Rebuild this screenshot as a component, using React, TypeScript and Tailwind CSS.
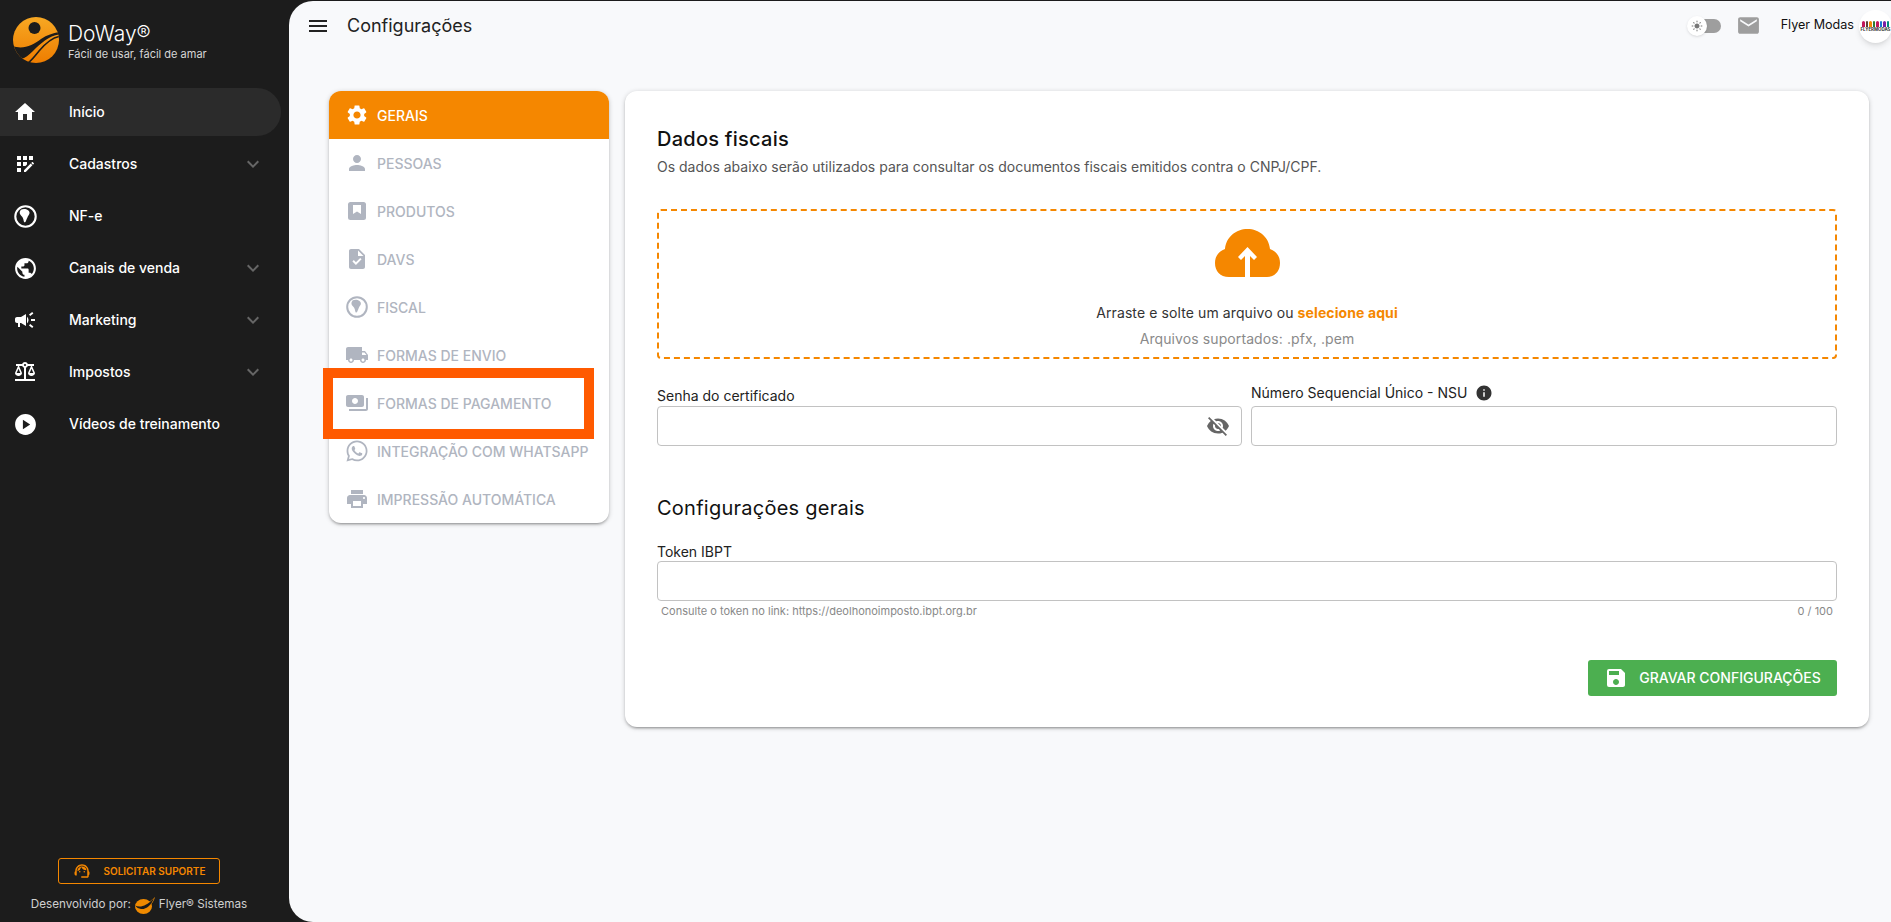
import React from 'react';
import {
  MdHome, MdAppRegistration, MdPublic, MdCampaign, MdBalance, MdPlayCircle, MdSupportAgent, MdPerson,
  MdTask, MdLocalShipping, MdPayments, MdPrint, MdVisibilityOff, MdInfo, MdSave, MdEmail, MdMenu,
  MdKeyboardArrowDown, MdSettings, MdLightMode,
} from 'react-icons/md';
import { FaWhatsapp } from 'react-icons/fa';

const Logo = () => (
  <svg viewBox="0 0 46 46" className="w-[46px] h-[46px] shrink-0">
    <defs>
      <linearGradient id="logoGrad" x1="0" y1="0" x2="0" y2="1">
        <stop offset="0" stopColor="#f7a823" />
        <stop offset="1" stopColor="#ee7d00" />
      </linearGradient>
      <clipPath id="logoClip">
        <circle cx="23" cy="23" r="23" />
      </clipPath>
    </defs>
    <circle cx="23" cy="23" r="23" fill="url(#logoGrad)" />
    <circle cx="21.5" cy="11" r="6" fill="#1c1c1c" />
    <g clipPath="url(#logoClip)">
      <path d="M0 29 C10 33 20 28 28 22 C34 18 40 16 46 15 L46 17.5 C36 19 28 26 20 34 C16 38 12 41 8 42 L0 46 Z" fill="#1c1c1c" />
      <path d="M46 19.5 C38 21 32 27 26 34 C22 39 19 43 15 46" fill="none" stroke="#1c1c1c" strokeWidth="1.6" />
    </g>
  </svg>
);

const FlyerLogo = () => (
  <svg viewBox="0 0 20 17" className="w-[20px] h-[17px] shrink-0">
    <ellipse cx="8.5" cy="9.5" rx="8.5" ry="7.5" fill="#f08a00" />
    <path d="M13 6 C15 4 18 2 20 0 C19 4 17 7 14 9Z" fill="#f08a00" />
    <path d="M0 8.5 C5 11 11 9.5 19 1 C16 9 11 12.5 6 12 C3.5 11.7 1.5 10.5 0 8.5Z" fill="#1c1c1c" />
  </svg>
);

const CloudUpload = () => (
  <svg viewBox="0 0 65 48" className="w-[65px] h-12">
    <path d="M14 48 C5 48 0 42 0 34 C0 27 4 22 10 20 C11 8 21 0 32.5 0 C44 0 54 8 55 20 C61 22 65 27 65 34 C65 42 60 48 52 48 L35 48 L35 27 L39 31 L42 28 L32.5 18 L23 28 L26 31 L30 27 L30 48 Z" fill="#f58700" />
  </svg>
);

// globo com a America do Sul, sem equivalente exato nos pacotes de icones
const GlobeSouth = ({ size = 24 }: { size?: number }) => (
  <svg viewBox="0 0 24 24" width={size} height={size} fill="none">
    <circle cx="12" cy="12" r="9.8" stroke="currentColor" strokeWidth="2" />
    <path d="M7.5 5.5 C9.5 4.5 12.5 4.5 14.5 6 C16 7 16.5 9 15 10.8 C14 12 13.5 14 12.5 16 C12 17.5 11 18 10.5 17 C10 15.5 10 14 9 12.5 C7.5 11 6 9.5 6.5 7.5 Z" fill="currentColor" />
  </svg>
);

const ProductIcon = () => (
  <svg viewBox="0 0 24 24" width={24} height={24}>
    <rect x="3" y="3" width="18" height="18" rx="2.5" fill="currentColor" />
    <path d="M8 6 H16 V15 L12 12.5 L8 15 Z" fill="#fff" />
  </svg>
);

const menu = [
  { label: 'Início', icon: <MdHome size={24} />, active: true },
  { label: 'Cadastros', icon: <MdAppRegistration size={24} />, sub: true },
  { label: 'NF-e', icon: <GlobeSouth size={25} /> },
  { label: 'Canais de venda', icon: <MdPublic size={25} />, sub: true },
  { label: 'Marketing', icon: <MdCampaign size={24} />, sub: true },
  { label: 'Impostos', icon: <MdBalance size={24} />, sub: true },
  { label: 'Vídeos de treinamento', icon: <MdPlayCircle size={25} /> },
];

const tabs = [
  { label: 'GERAIS', icon: <MdSettings size={24} />, active: true },
  { label: 'PESSOAS', icon: <MdPerson size={24} /> },
  { label: 'PRODUTOS', icon: <ProductIcon /> },
  { label: 'DAVS', icon: <MdTask size={24} /> },
  { label: 'FISCAL', icon: <GlobeSouth size={24} /> },
  { label: 'FORMAS DE ENVIO', icon: <MdLocalShipping size={24} /> },
  { label: 'FORMAS DE PAGAMENTO', icon: <MdPayments size={24} /> },
  { label: 'INTEGRAÇÃO COM WHATSAPP', icon: <FaWhatsapp size={24} /> },
  { label: 'IMPRESSÃO AUTOMÁTICA', icon: <MdPrint size={24} /> },
];

const cardShadow = 'shadow-[0_1px_5px_rgba(0,0,0,0.2),0_2px_2px_rgba(0,0,0,0.14),0_3px_1px_-2px_rgba(0,0,0,0.12)]';

const App: React.FC = () => {
  return (
    <div className="w-full h-[922px] flex bg-[#1c1c1c] overflow-hidden font-['Inter',sans-serif]">
      {/* Sidebar */}
      <aside className="w-[289px] shrink-0 flex flex-col text-white">
        <div className="flex items-start gap-[9px] pl-[13px] pt-[17px] h-[86px]">
          <Logo />
          <div>
            <div className="text-[21px] leading-[26px] font-light text-white mt-[4px]">DoWay®</div>
            <div className="text-[11px] leading-[14px] text-[#d5d5d5]">Fácil de usar, fácil de amar</div>
          </div>
        </div>
        <nav className="flex flex-col">
          {menu.map((m) => (
            <div key={m.label} className="h-[52px] flex items-center">
              <div className={`w-[281px] h-12 flex items-center rounded-r-[24px] ${m.active ? 'bg-[#2b2b2b]' : ''}`}>
                <span className="w-[50px] flex justify-center text-white">{m.icon}</span>
                <span className="ml-[19px] text-sm font-medium flex-1">{m.label}</span>
                {m.sub && <MdKeyboardArrowDown size={24} className="text-[#666] mr-4" />}
              </div>
            </div>
          ))}
        </nav>
        <div className="mt-auto flex flex-col items-center pb-[7px] pr-[11px]">
          <div className="w-[162px] h-[26px] border border-[#f58700] rounded-[3px] flex items-center justify-center gap-[13px] text-[#f58700]">
            <MdSupportAgent size={18} />
            <span className="text-[10px] font-semibold">SOLICITAR SUPORTE</span>
          </div>
          <div className="mt-[11px] h-[20px] flex items-center gap-[4px] text-[11.7px] text-[#cfcfcf]">
            <span>Desenvolvido por:</span>
            <FlyerLogo />
            <span>Flyer® Sistemas</span>
          </div>
        </div>
      </aside>

      {/* Main */}
      <main className="flex-1 mt-[1px] bg-[#f8f9fb] rounded-l-[24px] relative overflow-hidden flex flex-col">
        <header className="h-[49px] shrink-0 flex items-center pl-[17px]">
          <MdMenu size={24} className="text-[#222]" />
          <h1 className="ml-[17px] text-lg text-[#222]">Configurações</h1>
          <div className="ml-auto flex items-center">
            <div className="relative w-[30px] h-[14px] rounded-full bg-[#9e9e9e] mr-[15px]">
              <div className="absolute -left-[4px] -top-[3px] w-5 h-5 rounded-full bg-white shadow flex items-center justify-center text-[#777]">
                <MdLightMode size={12} />
              </div>
            </div>
            <MdEmail size={25} className="text-[#9e9e9e] mr-[20px]" />
            <span className="text-[12.6px] text-[#111] mr-[5px]">Flyer Modas</span>
            <div className="w-[33px] h-[33px] mt-[2px] -mr-[1px] rounded-full bg-white shadow-md overflow-hidden shrink-0 flex flex-col items-center justify-center">
              <div className="flex gap-[1px]">
                <span className="w-[2.5px] h-[6px] rounded-t-full bg-[#c2185b]" />
                <span className="w-[2.5px] h-[6px] rounded-t-full bg-[#5d4037]" />
                <span className="w-[2.5px] h-[6px] rounded-t-full bg-[#f58700]" />
                <span className="w-[2.5px] h-[6px] rounded-t-full bg-[#2e7d32]" />
                <span className="w-[2.5px] h-[6px] rounded-t-full bg-[#c2185b]" />
                <span className="w-[2.5px] h-[6px] rounded-t-full bg-[#1976d2]" />
                <span className="w-[2.5px] h-[6px] rounded-t-full bg-[#7b1fa2]" />
                <span className="w-[2.5px] h-[6px] rounded-t-full bg-[#00897b]" />
              </div>
              <span className="text-[4.4px] leading-[5px] font-bold text-[#333] whitespace-nowrap">FLYERMODAS</span>
            </div>
          </div>
        </header>

        <div className="flex items-start pl-10 pr-[22px] pt-[41px] gap-4">
          {/* Tabs */}
          <div className={`w-[280px] shrink-0 bg-white rounded-xl overflow-hidden ${cardShadow}`}>
            {tabs.map((t) => (
              <div key={t.label} className={`h-12 flex items-center ${t.active ? 'bg-[#f58700] text-white' : 'text-[#b0b5c0]'}`}>
                <span className="w-12 pl-4 flex">{t.icon}</span>
                <span className="text-sm font-medium pt-[1px]">{t.label}</span>
              </div>
            ))}
          </div>

          {/* Form */}
          <div className={`flex-1 h-[636px] bg-white rounded-xl pt-[32px] pl-[32px] pr-[32px] ${cardShadow}`}>
            <h2 className="text-xl leading-[32px] font-medium tracking-[0.25px] text-[#111]">Dados fiscais</h2>
            <p className="text-sm leading-5 text-[#555] mt-[2px]">Os dados abaixo serão utilizados para consultar os documentos fiscais emitidos contra o CNPJ/CPF.</p>
            <div className="mt-[32px] h-[150px] border-2 border-dashed border-[#f58700] rounded-[4px] flex flex-col items-center pt-[18px]">
              <CloudUpload />
              <p className="mt-[26px] text-sm leading-5 tracking-[0.1px] text-[#333]">Arraste e solte um arquivo ou <span className="font-bold text-[#f58700]">selecione aqui</span></p>
              <p className="mt-[6px] text-sm leading-5 tracking-[0.1px] text-[#8a8a8a]">Arquivos suportados: .pfx, .pem</p>
            </div>

            <div className="flex gap-[9px] mt-[24px]">
              <div className="w-[585px] shrink-0">
                <label className="block text-sm leading-5 text-[#222] mt-[3px]">Senha do certificado</label>
                <div className="h-10 border border-[#c2c2c2] rounded-[4px] flex items-center justify-end pr-[11px]">
                  <MdVisibilityOff size={24} className="text-[#666]" />
                </div>
              </div>
              <div className="flex-1">
                <label className="flex items-center gap-2 text-sm leading-5 text-[#222] mb-[3px]">Número Sequencial Único - NSU <MdInfo size={18} className="text-[#333]" /></label>
                <div className="h-10 border border-[#c2c2c2] rounded-[4px]" />
              </div>
            </div>

            <h2 className="mt-[46px] text-xl leading-8 tracking-[0.25px] text-[#111]">Configurações gerais</h2>
            <label className="block mt-[18px] text-sm leading-[19px] text-[#222]">Token IBPT</label>
            <div className="h-10 border border-[#c2c2c2] rounded-[4px]" />
            <div className="flex justify-between text-[11px] leading-[14px] text-[#888] pl-[4px] pr-[4px] mt-[3px]">
              <span>Consulte o token no link: https://deolhonoimposto.ibpt.org.br</span>
              <span>0 / 100</span>
            </div>
            <div className="flex justify-end mt-[42px]">
              <div className="w-[249px] h-9 bg-[#4caf50] rounded-[3px] flex items-center justify-center gap-[11px] text-white">
                <MdSave size={24} />
                <span className="text-sm font-medium">GRAVAR CONFIGURAÇÕES</span>
              </div>
            </div>
          </div>
        </div>

        {/* Destaque sobre o item de menu */}
        <div className="absolute left-[34px] top-[367px] w-[271px] h-[71px] border-[10px] border-[#ff5a00]" />
      </main>
    </div>
  );
};

export default App;
